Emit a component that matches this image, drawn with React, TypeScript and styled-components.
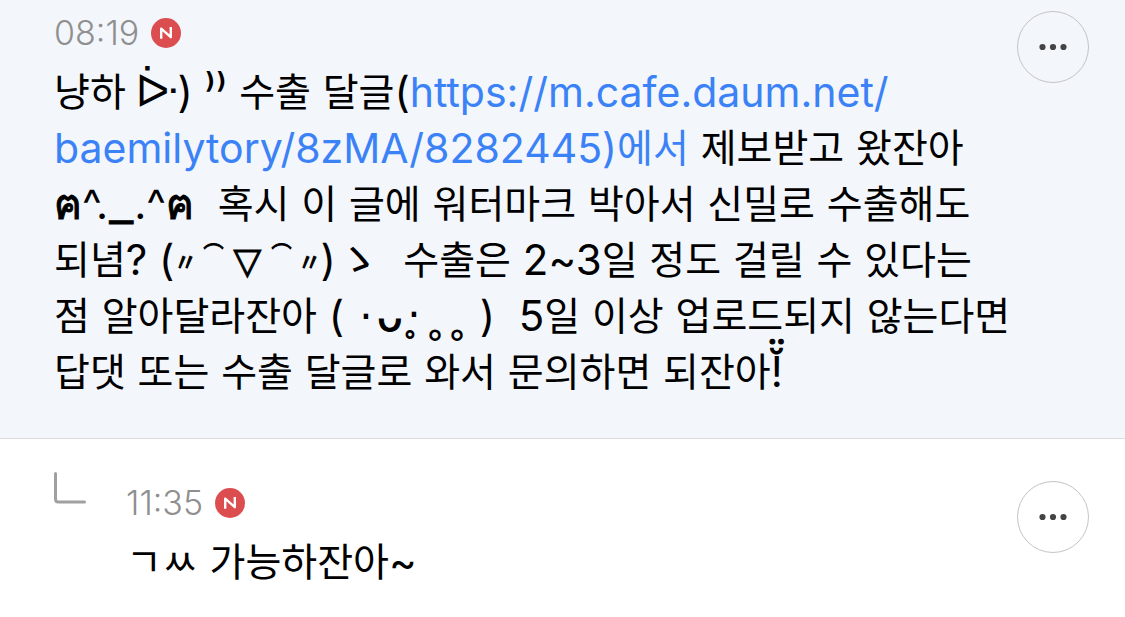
import React from "react";
import styled, { createGlobalStyle } from "styled-components";

const GlobalStyle = createGlobalStyle`
  * { box-sizing: border-box; }
  body {
    margin: 0;
    background: #fff;
    color: #000;
    font-family: Inter, "Noto Sans CJK KR", "DejaVu Sans", sans-serif;
  }
`;

const Comment = styled.article<{ $highlighted?: boolean }>`
  display: flex;
  align-items: flex-start;
  padding: ${(p) => (p.$highlighted ? "11px 36px 38px 54px" : "42px 36px 28px 54px")};
  background: ${(p) => (p.$highlighted ? "#f3f6fb" : "#fff")};
  border-bottom: ${(p) => (p.$highlighted ? "1px solid #d9dbde" : "0")};
`;

const ReplyMark = styled.svg`
  flex: none;
  width: 32px;
  height: 32px;
  margin: -9px 40px 0 0;
`;

const Content = styled.div`
  flex: 1;
  min-width: 0;
`;

const Meta = styled.header`
  display: flex;
  align-items: center;
  gap: 12px;
  height: 44px;
`;

const Time = styled.time`
  font-size: 34px;
  font-weight: 300;
  line-height: 46px;
  color: #8f8f8f;
`;

const NewBadge = styled.svg`
  width: 30px;
  height: 30px;
`;

const Body = styled.p`
  margin: 9px 0 0;
  font-size: 42px;
  line-height: 56px;
  white-space: nowrap;
`;

const Hangul = styled.span`
  font-family: "Noto Sans CJK KR", sans-serif;
  font-size: 39px;
  line-height: 1;
  vertical-align: 1px;
`;

const Glyph = styled.span<{ $size: number; $width: number; $raise?: number; $heavy?: boolean }>`
  display: inline-flex;
  justify-content: center;
  width: ${(p) => p.$width}px;
  font-family: "DejaVu Sans", "Noto Sans CJK KR", sans-serif;
  font-size: ${(p) => p.$size}px;
  line-height: 1;
  height: 1em;
  margin: -8px 0;
  vertical-align: ${(p) => p.$raise ?? 0}px;
  -webkit-text-stroke: ${(p) => (p.$heavy ? "1px currentColor" : "0")};
`;

const Accented = styled.span`
  position: relative;
`;

const Accent = styled.span`
  position: absolute;
  left: -14px;
  top: -2px;
  line-height: 1;
  -webkit-text-stroke: 1px currentColor;
`;

const Link = styled.a`
  color: #3b82f7;
  font-size: 41px;
  text-decoration: none;
`;

const MoreButton = styled.button`
  flex: none;
  display: grid;
  place-items: center;
  width: 72px;
  height: 72px;
  margin-left: -72px;
  padding: 0;
  border: 1px solid #c4c4c4;
  border-radius: 50%;
  background: transparent;
  cursor: pointer;
`;

function Text({ children }: { children: string }) {
  return (
    <>
      {children.split(/([\u3131-\u318e\uac00-\ud7a3]+)/).map((part, i) =>
        i % 2 ? <Hangul key={i}>{part}</Hangul> : part
      )}
    </>
  );
}

function New() {
  return (
    <NewBadge viewBox="0 0 30 30" role="img" aria-label="New">
      <circle cx="15" cy="15" r="15" fill="#dc4d50" />
      <path
        d="M10.2 20.8V10.6L19.8 19.2V9"
        fill="none"
        stroke="#fff"
        strokeWidth="2.4"
        strokeLinejoin="round"
      />
    </NewBadge>
  );
}

function More() {
  return (
    <MoreButton type="button" aria-label="More">
      <svg width="30" height="8" viewBox="0 0 30 8" fill="#444">
        <circle cx="4.5" cy="4" r="3.1" />
        <circle cx="15" cy="4" r="3.1" />
        <circle cx="25.5" cy="4" r="3.1" />
      </svg>
    </MoreButton>
  );
}

export default function App() {
  return (
    <main>
      <GlobalStyle />
      <Comment $highlighted>
        <Content>
          <Meta>
            <Time>08:19</Time>
            <New />
          </Meta>
          <Body lang="ko">
            <Text>냥하 </Text>
            <Glyph $size={44} $width={40}>ᐕ</Glyph>
            <Text>) ⁾⁾ 수출 달글(</Text>
            <Link href="https://m.cafe.daum.net/baemilytory/8zMA/8282445">
              https://m.cafe.daum.net/
              <br />
              <Text>baemilytory/8zMA/8282445)에서</Text>
            </Link>
            <Text> 제보받고 왔잔아</Text>
            <br />
            <Glyph $size={42} $width={28} $heavy>ฅ</Glyph>^.
            <Glyph $size={46} $width={26} $raise={6} $heavy>_</Glyph>.^
            <Glyph $size={42} $width={28} $heavy>ฅ</Glyph>
            <Text>&nbsp; 혹시 이 글에 워터마크 박아서 신밀로 수출해도</Text>
            <br />
            <Text>되념? (</Text>
            <Glyph $size={24} $width={22} $raise={4} $heavy>〃</Glyph>
            <Glyph $size={20} $width={34} $raise={14} $heavy>⌒</Glyph>
            <Glyph $size={36} $width={34} $raise={2} $heavy>▽</Glyph>
            <Glyph $size={20} $width={34} $raise={14} $heavy>⌒</Glyph>
            <Glyph $size={24} $width={22} $raise={4} $heavy>〃</Glyph>)
            <Glyph $size={44} $width={44}>ゝ</Glyph>
            <Text>&nbsp; 수출은 2~3일 정도 걸릴 수 있다는</Text>
            <br />
            <Text>점 알아달라잔아 ( </Text>
            <Glyph $size={42} $width={20}>·</Glyph>
            <Glyph $size={42} $width={28} $heavy>ᴗ</Glyph>
            <Glyph $size={42} $width={20} $raise={2}>·̥</Glyph>
            <Glyph $size={42} $width={22}>˳</Glyph>
            <Glyph $size={42} $width={22}>˳</Glyph>
            <Text> )&nbsp; 5일 이상 업로드되지 않는다면</Text>
            <br />
            <Text>답댓 또는 수출 달글로 와서 문의하면 되잔아</Text>
            <Accented>
              !<Accent>&nbsp;̆̈</Accent>
            </Accented>
          </Body>
        </Content>
        <More />
      </Comment>
      <Comment>
        <ReplyMark viewBox="0 0 32 32" aria-hidden="true">
          <path
            d="M1.5 1.5V27Q1.5 30 4.5 30H30.5"
            fill="none"
            stroke="#a0a0a0"
            strokeWidth="3"
            strokeLinecap="round"
          />
        </ReplyMark>
        <Content>
          <Meta>
            <Time>11:35</Time>
            <New />
          </Meta>
          <Body lang="ko">
            <Text>ㄱㅆ 가능하잔아~</Text>
          </Body>
        </Content>
        <More />
      </Comment>
    </main>
  );
}
